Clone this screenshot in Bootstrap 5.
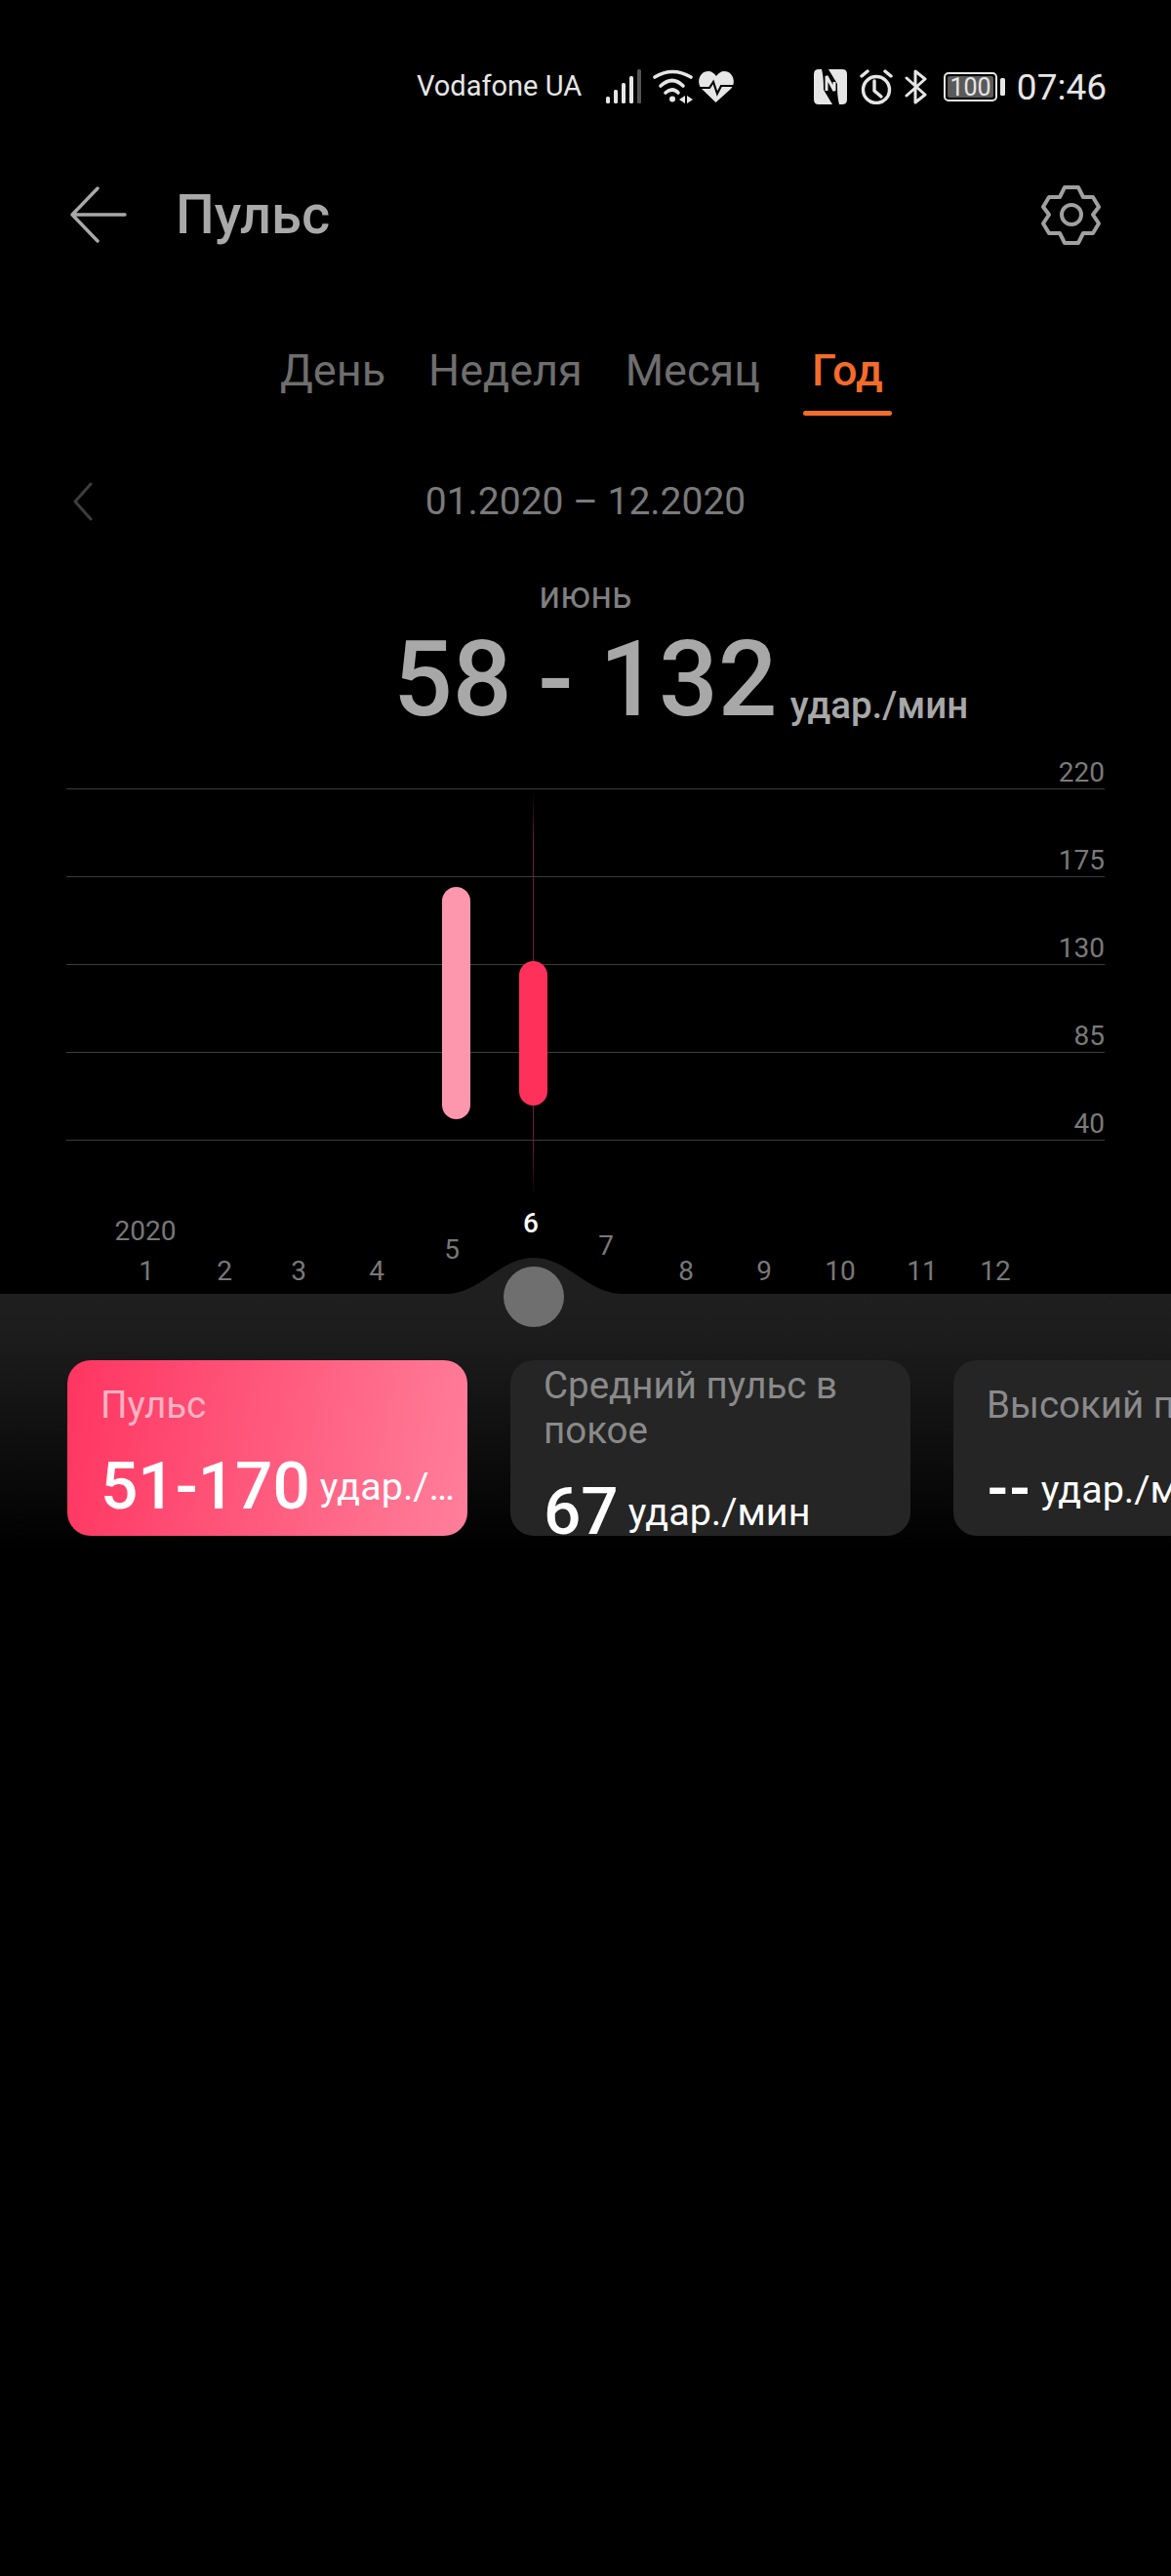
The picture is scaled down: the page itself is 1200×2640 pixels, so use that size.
<!DOCTYPE html>
<html lang="ru">
<head>
    <meta charset="UTF-8">
    <meta name="viewport" content="width=device-width, initial-scale=1.0">
    <title>Пульс</title>
    <link href="https://cdn.jsdelivr.net/npm/bootstrap@5.3.3/dist/css/bootstrap.min.css" rel="stylesheet">
    <style>
        html, body { background: #000; }
        body { width: 1200px; height: 2640px; overflow: hidden; font-family: Roboto, "Liberation Sans", sans-serif; }
        svg { display: block; flex: none; }

        .status_bar { height: 118px; padding: 60px 66px 0 427px; color: #e6e6e6; }
        .status_carrier { font-size: 29px; width: 194px; white-space: nowrap; }
        .status_time { font-size: 37px; margin-left: 11px; line-height: 1; }

        .title_bar { height: 106px; margin-top: 49px; padding: 0 64px 0 72px; }
        .title_text { font-size: 56px; font-weight: 500; color: #a9a9a9; margin: 0 0 0 48px; line-height: 1; }

        .tab_row { height: 186px; padding: 77px 0 0 287px; gap: 44px; font-size: 45px; color: #6e6e6e; }
        .tab_item { position: relative; line-height: 60px; height: 60px; }
        .tab_active { color: #f36c2a; font-weight: 500; margin-left: 9px; }
        .tab_active::after { content: ""; position: absolute; left: -9px; right: -9px; top: 71px; height: 5px; border-radius: 3px; background: #f36c2a; }

        .date_row { height: 110px; padding-left: 75px; }
        .date_text { font-size: 39px; color: #7a7a7a; width: 1010px; text-align: center; line-height: 1; }

        .month_name { font-size: 38px; color: #7f7f7f; text-align: center; line-height: 40px; margin-top: 21px; height: 40px; }
        .range_row { height: 108px; padding-left: 403px; margin-top: 13px; color: #a8a8a8; }
        .range_value { font-size: 107px; font-weight: 500; line-height: 108px; white-space: nowrap; }
        .range_unit { font-size: 38.5px; font-weight: 500; margin-left: 13px; line-height: 1; white-space: nowrap; margin-bottom: 9px; }

        .chart_box { position: relative; height: 558px; padding: 0 68px; margin-top: 17px; }
        .chart_row { height: 90px; border-bottom: 1px solid #3d3d3d; font-size: 28px; color: #7a7a7a; text-align: right; line-height: 1; }
        .chart_row_first { height: 41px; }
        .chart_row > span { position: relative; top: 59px; display: block; }
        .chart_row_first > span { top: 10px; }
        .pick_line { position: absolute; left: 546px; top: 42px; bottom: 100px; width: 1px; background: linear-gradient(#000, #6b1f35 12%, #6b1f35 88%, #000); }
        .pulse_bar { position: absolute; width: 29px; border-radius: 15px; }
        .bar_pale { background: #fd97ae; }
        .bar_red { background: #ff315b; }
        .axis_tick { position: absolute; font-size: 28px; color: #787878; line-height: 1; transform: translate(-50%, -50%); }
        .axis_tick_on { color: #fff; font-weight: 500; }
        .axis_bump { position: absolute; left: 447px; top: 519px; }
        .axis_knob { position: absolute; left: 516px; top: 530px; width: 62px; height: 62px; border-radius: 50%; background: #6f6f6f; z-index: 2; }

        .stat_panel { height: 264px; padding: 68px 0 0 69px; gap: 44px; background: linear-gradient(#1f1f1f, #1c1c1c 18%, #000); overflow: hidden; }
        .stat_tile { width: 410px; height: 180px; flex: none; border-radius: 24px; background: #252525; overflow: hidden; padding: 23px 34px 0; color: #fff; }
        .stat_tile_tall { padding-top: 3px; }
        .stat_tile_on { background: linear-gradient(100deg, #ff3560, #ff7f9b); }
        .stat_name { font-size: 38.5px; line-height: 46px; color: #8a8a8a; white-space: nowrap; }
        .stat_tile_on .stat_name { color: #ffb3c4; }
        .stat_figures { margin-top: 24px; white-space: nowrap; }
        .stat_figures_low { margin-top: 30px; }
        .stat_value { font-size: 67.5px; font-weight: 500; line-height: 72px; }
        .stat_unit { font-size: 39.5px; margin-left: 10px; white-space: nowrap; position: relative; top: -9px; }
        .stat_dashes { font-size: 58px; font-weight: 700; line-height: 72px; position: relative; top: -4px; }
    </style>
</head>

<body>
    <!-- Status bar -->
    <div class="status_bar d-flex align-items-center">
        <span class="status_carrier">Vodafone UA</span>
        <svg width="40" height="36" viewBox="0 0 40 36">
            <rect x="0" y="28" width="4" height="7" rx="1.5" fill="#e6e6e6"/>
            <rect x="8" y="21" width="4" height="14" rx="1.5" fill="#e6e6e6"/>
            <rect x="16" y="14" width="4" height="21" rx="1.5" fill="#e6e6e6"/>
            <rect x="24" y="7" width="4" height="28" rx="1.5" fill="#e6e6e6"/>
            <rect x="32" y="0" width="4" height="35" rx="1.5" fill="#555"/>
        </svg>
        <svg class="ms-2" width="42" height="36" viewBox="7 7 42 36" fill="none" stroke="#e6e6e6" stroke-width="3.6" stroke-linecap="round">
            <path d="M9 15 Q27 4 46 15"/>
            <path d="M15 24 Q27 13 38 24"/>
            <path d="M20 31 Q27 25 33 31"/>
            <circle cx="27" cy="37.5" r="3" fill="#e6e6e6" stroke="none"/>
            <path d="M40 34 L34 38 L40 42 Z M42 34 L48 38 L42 42 Z" fill="#e6e6e6" stroke="none"/>
        </svg>
        <svg class="ms-1" width="37" height="35" viewBox="57 8 37 35">
            <path d="M75.5 41 L61 27 C55 20 59 9 68 9 C71 9 74 11 76 14 C78 11 81 9 84 9 C93 9 97 20 91 27 Z" fill="#e6e6e6"/>
            <path d="M57 26 H69 L73 20 L77 32 L81 24 H94" fill="none" stroke="#000" stroke-width="2.2"/>
        </svg>
        <span class="ms-auto"></span>
        <svg width="34" height="36" viewBox="0 0 34 36">
            <path d="M5 0 H8 C10 8 10 16 10 21 L19 36 H5 Q0 36 0 31 V5 Q0 0 5 0 Z" fill="#e6e6e6"/>
            <path d="M29 36 H26 C24 28 24 20 24 15 L15 0 H29 Q34 0 34 5 V31 Q34 36 29 36 Z" fill="#e6e6e6"/>
            <path d="M13 22 V7 L21 22 V13" fill="none" stroke="#e6e6e6" stroke-width="3"/>
        </svg>
        <svg class="ms-2" width="39" height="36" viewBox="-5 0 39 36" fill="none" stroke="#e6e6e6" stroke-width="3.4" stroke-linecap="round">
            <circle cx="17" cy="21" r="13.5"/>
            <path d="M15 12 V22 L22 28"/>
            <path d="M2 7 L8 2 M32 7 L26 2"/>
        </svg>
        <svg class="ms-2" width="28" height="36" viewBox="-4 0 28 36" fill="none" stroke="#e6e6e6" stroke-width="3" stroke-linecap="round" stroke-linejoin="round">
            <path d="M2 9 L21 26 L11 34 V2 L21 10 L2 27"/>
        </svg>
        <svg class="ms-3" width="64" height="30" viewBox="0 0 64 30">
            <rect x="1" y="1" width="53" height="28" rx="4" fill="none" stroke="#e6e6e6" stroke-width="2"/>
            <rect x="4" y="4" width="47" height="22" rx="2" fill="#5a5a5a"/>
            <text x="27.5" y="24" font-size="25" fill="#e6e6e6" text-anchor="middle" font-family="Roboto, sans-serif">100</text>
            <rect x="58" y="6" width="5" height="18" rx="1.5" fill="#e6e6e6"/>
        </svg>
        <span class="status_time">07:46</span>
    </div>

    <!-- Title -->
    <div class="title_bar d-flex align-items-center">
        <svg width="60" height="58" viewBox="0 0 60 58" fill="none" stroke="#a9a9a9" stroke-width="3.4" stroke-linecap="round" stroke-linejoin="round">
            <path d="M28 2 L2 29 L28 56 M2 29 H56"/>
        </svg>
        <h1 class="title_text">Пульс</h1>
        <svg class="ms-auto" width="76" height="76" viewBox="0 0 76 76" fill="none" stroke="#a0a0a0" stroke-width="4" stroke-linejoin="round">
            <path d="M31 10 H45 L50 20 H60 L66 30 L60 38 L66 47 L60 57 H50 L45 67 H31 L26 57 H15 L9 47 L15 38 L9 30 L15 20 H26 Z"/>
            <circle cx="38" cy="38" r="10"/>
        </svg>
    </div>

    <!-- Period tabs -->
    <div class="tab_row d-flex">
        <span class="tab_item">День</span>
        <span class="tab_item">Неделя</span>
        <span class="tab_item">Месяц</span>
        <span class="tab_item tab_active">Год</span>
    </div>

    <!-- Date range -->
    <div class="date_row d-flex align-items-center">
        <svg width="20" height="40" viewBox="0 0 20 40" fill="none" stroke="#3d3d3d" stroke-width="3" stroke-linecap="round" stroke-linejoin="round">
            <path d="M18 2 L2 20 L18 38"/>
        </svg>
        <span class="date_text">01.2020 – 12.2020</span>
    </div>

    <!-- Selected month -->
    <div class="month_name">июнь</div>
    <div class="range_row d-flex align-items-end">
        <span class="range_value">58 - 132</span>
        <span class="range_unit">удар./мин</span>
    </div>

    <!-- Chart -->
    <div class="chart_box">
        <div class="chart_row chart_row_first"><span>220</span></div>
        <div class="chart_row"><span>175</span></div>
        <div class="chart_row"><span>130</span></div>
        <div class="chart_row"><span>85</span></div>
        <div class="chart_row"><span>40</span></div>

        <div class="pick_line"></div>
        <div class="pulse_bar bar_pale" style="left: 453px; top: 141px; height: 238px;"></div>
        <div class="pulse_bar bar_red" style="left: 532px; top: 217px; height: 148px;"></div>

        <svg class="axis_bump" width="200" height="40" viewBox="0 0 200 40">
            <path d="M0 39 H10 C45 39 65 2 100 2 C135 2 155 39 191 39 H200 V40 H0 Z" fill="#1f1f1f"/>
        </svg>
        <div class="axis_knob"></div>

        <span class="axis_tick" style="left: 149px; top: 494px;">2020</span>
        <span class="axis_tick" style="left: 150px; top: 535px;">1</span>
        <span class="axis_tick" style="left: 230px; top: 535px;">2</span>
        <span class="axis_tick" style="left: 306px; top: 535px;">3</span>
        <span class="axis_tick" style="left: 386px; top: 535px;">4</span>
        <span class="axis_tick" style="left: 463px; top: 513px;">5</span>
        <span class="axis_tick axis_tick_on" style="left: 544px; top: 486px;">6</span>
        <span class="axis_tick" style="left: 621px; top: 509px;">7</span>
        <span class="axis_tick" style="left: 703px; top: 535px;">8</span>
        <span class="axis_tick" style="left: 783px; top: 535px;">9</span>
        <span class="axis_tick" style="left: 861px; top: 535px;">10</span>
        <span class="axis_tick" style="left: 945px; top: 535px;">11</span>
        <span class="axis_tick" style="left: 1020px; top: 535px;">12</span>
    </div>

    <!-- Stat tiles -->
    <div class="stat_panel d-flex">
        <div class="stat_tile stat_tile_on">
            <div class="stat_name">Пульс</div>
            <div class="stat_figures d-flex align-items-baseline">
                <span class="stat_value">51-170</span>
                <span class="stat_unit">удар./…</span>
            </div>
        </div>
        <div class="stat_tile stat_tile_tall">
            <div class="stat_name">Средний пульс в<br>покое</div>
            <div class="stat_figures d-flex align-items-baseline">
                <span class="stat_value">67</span>
                <span class="stat_unit">удар./мин</span>
            </div>
        </div>
        <div class="stat_tile">
            <div class="stat_name">Высокий пульс</div>
            <div class="stat_figures stat_figures_low d-flex align-items-baseline">
                <span class="stat_dashes">--</span>
                <span class="stat_unit">удар./мин</span>
            </div>
        </div>
    </div>

    <script src="https://cdn.jsdelivr.net/npm/bootstrap@5.3.3/dist/js/bootstrap.bundle.min.js"></script>
</body>
</html>
